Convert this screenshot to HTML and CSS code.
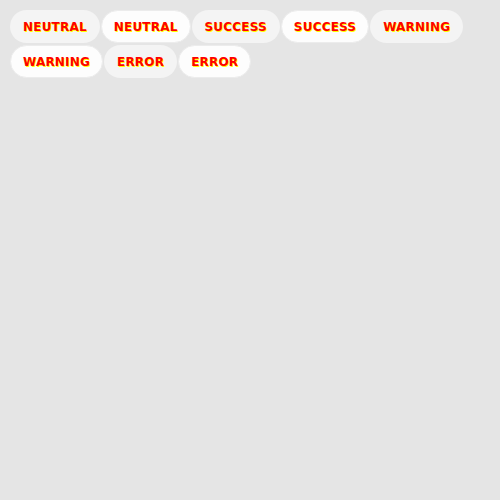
FILE: index.html
```html
<!DOCTYPE html>
<html>
<head>
<meta charset="utf-8">
<link rel="stylesheet" href="styles.css">
</head>
<body>
<div class="chips">
  <span class="chip chip-soft">Neutral</span>
  <span class="chip chip-raised">Neutral</span>
  <span class="chip chip-soft">Success</span>
  <span class="chip chip-raised">Success</span>
  <span class="chip chip-soft">Warning</span>
  <span class="chip chip-raised">Warning</span>
  <span class="chip chip-soft">Error</span>
  <span class="chip chip-raised">Error</span>
</div>
</body>
</html>
```
FILE: styles.css
```css
html, body {
  margin: 0;
  background: #e5e5e5;
}
body {
  padding: 10px;
  font-family: "DejaVu Sans", sans-serif;
}
.chips {
  display: flex;
  flex-wrap: wrap;
  gap: 2px 1px;
}
.chip {
  display: inline-flex;
  align-items: center;
  height: 33px;
  padding: 0 13px;
  box-sizing: border-box;
  border-radius: 17px;
  font-size: 12px;
  font-weight: bold;
  text-transform: uppercase;
  letter-spacing: 0.2px;
  color: #ff0000;
  text-shadow: 1px 1px 0 #ffff00;
}
.chip-soft {
  background: #f4f4f4;
}
.chip-raised {
  padding: 0 12px;
  background: #fdfdfd;
  border: 1px solid #ececec;
}
```
